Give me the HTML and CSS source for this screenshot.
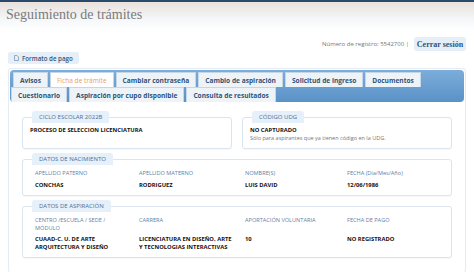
FILE: index.html
```html
<!DOCTYPE html>
<html lang="es">

<head>
    <meta charset="UTF-8">
    <title>Seguimiento de trámites</title>
    <link rel="stylesheet" href="styles.css">
</head>

<body>
    <div class="topbar"></div>
    <header class="head">
        <h1>Seguimiento de trámites</h1>
    </header>

    <div class="page">
        <div class="userbar">
            <span class="reg">Número de registro: 5542700 |</span>
            <button class="logout">Cerrar sesión</button>
        </div>

        <div class="actions">
            <button class="pay">
                <svg width="5" height="6" viewBox="0 0 5 6"><path d="M0.5 0.5h2.5l1.5 1.5v3.5h-4z" fill="none" stroke="#7d9ab8" stroke-width="0.8"/></svg>
                Formato de pago
            </button>
        </div>

        <div class="tabbox">
            <div class="nav">
                <ul class="tabrow first">
                    <li>Avisos</li>
                    <li class="active">Ficha de trámite</li>
                    <li>Cambiar contraseña</li>
                    <li>Cambio de aspiración</li>
                    <li>Solicitud de ingreso</li>
                    <li>Documentos</li>
                </ul>
                <ul class="tabrow">
                    <li>Cuestionario</li>
                    <li>Aspiración por cupo disponible</li>
                    <li>Consulta de resultados</li>
                </ul>
            </div>

            <div class="panel">
                <div class="pair">
                    <fieldset class="box">
                        <legend>CICLO ESCOLAR 2022B</legend>
                        <p class="val">PROCESO DE SELECCION LICENCIATURA</p>
                    </fieldset>
                    <fieldset class="box">
                        <legend>CÓDIGO UDG</legend>
                        <p class="val">NO CAPTURADO</p>
                        <p class="note">Sólo para aspirantes que ya tienen código en la UDG.</p>
                    </fieldset>
                </div>

                <fieldset class="box">
                    <legend>DATOS DE NACIMIENTO</legend>
                    <div class="grid">
                        <span class="lbl">APELLIDO PATERNO</span>
                        <span class="lbl">APELLIDO MATERNO</span>
                        <span class="lbl">NOMBRE(S)</span>
                        <span class="lbl">FECHA (Día/Mes/Año)</span>
                        <span class="val">CONCHAS</span>
                        <span class="val">RODRIGUEZ</span>
                        <span class="val">LUIS DAVID</span>
                        <span class="val">12/06/1986</span>
                    </div>
                </fieldset>

                <fieldset class="box">
                    <legend>DATOS DE ASPIRACIÓN</legend>
                    <div class="grid">
                        <span class="lbl">CENTRO /ESCUELA / SEDE / MÓDULO</span>
                        <span class="lbl">CARRERA</span>
                        <span class="lbl">APORTACIÓN VOLUNTARIA</span>
                        <span class="lbl">FECHA DE PAGO</span>
                        <span class="val">CUAAD-C. U. DE ARTE ARQUITECTURA Y DISEÑO</span>
                        <span class="val">LICENCIATURA EN DISEÑO, ARTE Y TECNOLOGIAS INTERACTIVAS</span>
                        <span class="val">10</span>
                        <span class="val">NO REGISTRADO</span>
                    </div>
                </fieldset>
            </div>
        </div>
    </div>
</body>

</html>
```

FILE: styles.css
```css
/* Pagina */
body {
    margin: 0;
    font-family: "Open Sans", sans-serif;
    background: #fff;
    color: #222;
}

.topbar {
    height: 2px;
    background: #2b4a69;
}

.head {
    height: 28px;
    background: linear-gradient(#e9e2dc, #f4f6f8 60%, #fff);
    padding: 0 6px;
}

.head h1 {
    margin: 0;
    font-family: "Liberation Serif", serif;
    font-weight: normal;
    font-size: 14px;
    line-height: 25px;
    color: #7a7a7a;
}

.page {
    margin: 0 8px;
}

/* Barra de usuario */
.userbar {
    display: flex;
    justify-content: flex-end;
    align-items: center;
    gap: 5px;
    margin-top: 7px;
    height: 14px;
}

.reg {
    font-size: 6px;
    color: #777;
}

button {
    border: none;
    cursor: pointer;
    padding: 0;
}

.logout {
    background: #e6eff8;
    border-radius: 3px;
    height: 14px;
    width: 52px;
    font-family: "Liberation Serif", serif;
    font-size: 8px;
    font-weight: bold;
    color: #2f5478;
}

.actions {
    margin-top: 1px;
    height: 12px;
}

.pay {
    display: flex;
    align-items: center;
    gap: 3px;
    height: 12px;
    padding: 0 6px 0 6px;
    background: #e6eff8;
    border-radius: 2px;
    font-family: "Open Sans", sans-serif;
    font-size: 6.2px;
    font-weight: 600;
    color: #2f5478;
}

/* Pestañas */
.tabbox {
    margin-top: 4px;
    border: 1px solid #e3ebf3;
    border-radius: 3px;
    padding: 1px;
}

.nav {
    background: linear-gradient(#7caddb, #5a92c7);
    border-radius: 4px;
    padding: 2px 0 0 1px;
}

.tabrow {
    display: flex;
    gap: 2px;
    list-style: none;
    margin: 0;
    padding: 0;
}

.tabrow.first {
    padding-left: 2px;
}

.tabrow li {
    height: 15px;
    line-height: 15px;
    padding: 0 6px;
    background: #eef3f8;
    border: 1px solid #c5d6e7;
    border-bottom: none;
    font-size: 6.6px;
    font-weight: bold;
    color: #2f5478;
    box-sizing: border-box;
}

.tabrow li.active {
    background: #fff;
    color: #e8a068;
    font-weight: normal;
}

/* Panel */
.panel {
    padding: 9px 12px 9px;
}

.pair {
    display: grid;
    grid-template-columns: 1fr 1fr;
    gap: 10px;
}

.box {
    margin: 0 0 4px;
    border: 1px solid #dbe5ef;
    border-radius: 3px;
    padding: 3px 7px 6px;
    box-shadow: 0 1px 1px rgba(0, 0, 0, 0.03);
}

.box legend {
    margin-left: 2px;
    padding: 0 7px;
    height: 12px;
    line-height: 12px;
    background: #e6f0fa;
    border-radius: 3px 3px 0 0;
    font-size: 6px;
    color: #4a6f99;
}

.box p {
    margin: 0;
}

.val {
    font-size: 5.8px;
    font-weight: bold;
    color: #111;
}

.note {
    font-size: 5.5px;
    color: #777;
}

.grid {
    display: grid;
    grid-template-columns: 104px 106px 102px 1fr;
    row-gap: 4px;
    padding: 2px 5px 0;
    line-height: 7.5px;
}

.grid span {
    padding-right: 10px;
}

.lbl {
    font-size: 5.6px;
    color: #5f7fa6;
}
```
